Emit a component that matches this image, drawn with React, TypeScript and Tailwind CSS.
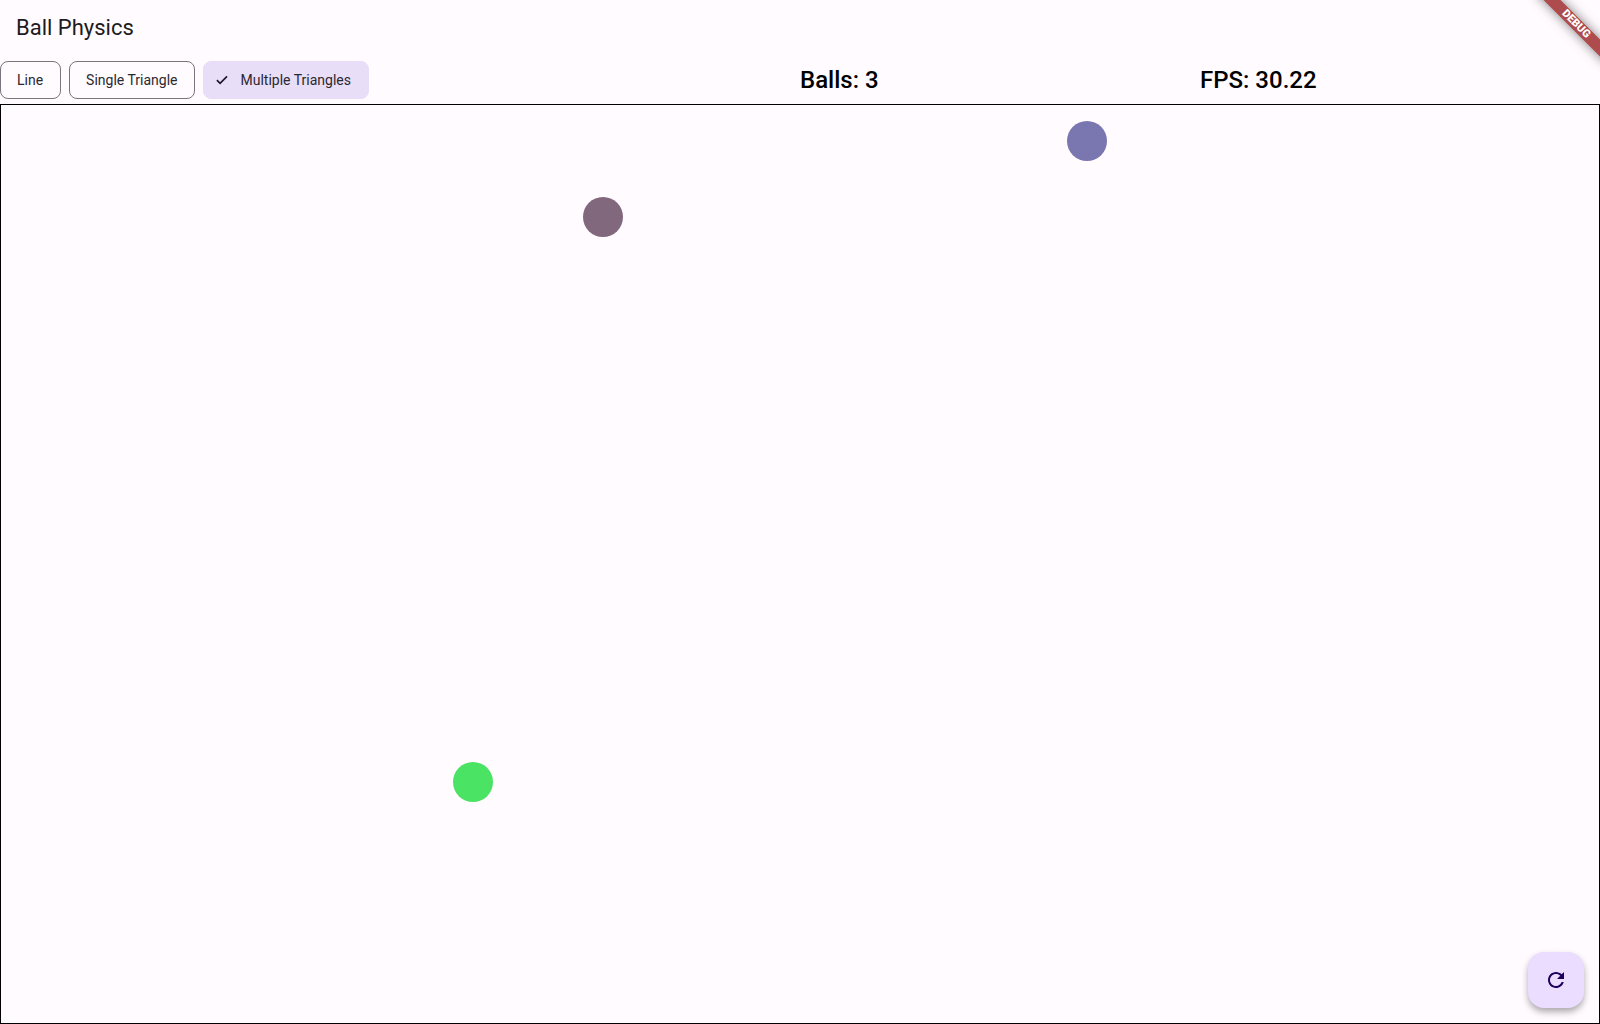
import { useState } from 'react';

const MODES = ['Line', 'Single Triangle', 'Multiple Triangles'];

const BALLS = [
  { id: 1, x: 1066, y: 16, color: '#7a77b0' },
  { id: 2, x: 582, y: 92, color: '#82687d' },
  { id: 3, x: 452, y: 657, color: '#4ae364' },
];

function CheckMark() {
  return (
    <svg viewBox="0 0 12 10" className="ml-3 mr-3 h-[10px] w-3 shrink-0" fill="none" aria-hidden="true">
      <path d="M0.9 5.2 L4.1 8.4 L11 1.4" stroke="#1d192b" strokeWidth="1.7" />
    </svg>
  );
}

function Chip({ label, selected, onSelect }: { label: string; selected: boolean; onSelect: () => void }) {
  return (
    <button
      type="button"
      aria-pressed={selected}
      onClick={onSelect}
      className={
        selected
          ? 'flex h-[38px] items-center rounded-lg border border-[#e8def8] bg-[#e8def8] pr-[17px] text-sm text-[#2b2830]'
          : 'flex h-[38px] items-center rounded-lg border border-[#79747e] pl-4 pr-[17px] text-sm text-[#2b2830]'
      }
    >
      {selected && <CheckMark />}
      {label}
    </button>
  );
}

function DebugBanner() {
  return (
    <div className="pointer-events-none absolute right-0 top-0 size-20 overflow-hidden">
      <div className="absolute -right-[26px] top-[18px] flex h-3 w-[100px] rotate-45 items-center justify-center bg-[#ae4b4d] text-[11px] font-black leading-3 text-white shadow-[0_0_12px_rgba(0,0,0,0.5)]">
        DEBUG
      </div>
    </div>
  );
}

export default function App() {
  const [mode, setMode] = useState('Multiple Triangles');

  return (
    <div className="relative flex min-h-screen flex-col overflow-hidden bg-[#fffbff] font-[Roboto,sans-serif] text-[#1d1b20]">
      <header className="flex h-14 items-center px-4">
        <h1 className="text-[22px] leading-7">Ball Physics</h1>
      </header>

      <div className="grid h-12 grid-cols-[2fr_1fr_1fr] items-center">
        <div className="flex gap-2">
          {MODES.map((name) => (
            <Chip key={name} label={name} selected={mode === name} onSelect={() => setMode(name)} />
          ))}
        </div>
        <p className="text-2xl font-medium text-black">Balls: 3</p>
        <p className="text-2xl font-medium text-black">FPS: 30.22</p>
      </div>

      <main className="relative grow border border-black">
        {BALLS.map((ball) => (
          <div
            key={ball.id}
            className="absolute size-10 rounded-full"
            style={{ left: ball.x, top: ball.y, backgroundColor: ball.color }}
          />
        ))}
      </main>

      <button
        type="button"
        aria-label="Restart"
        className="absolute bottom-4 right-4 flex size-14 items-center justify-center rounded-2xl bg-[#eaddff] shadow-[0_4px_6px_-1px_rgba(0,0,0,0.25),0_4px_10px_0_rgba(0,0,0,0.14)]"
      >
        <svg viewBox="0 0 24 24" className="size-6" fill="#21005d" aria-hidden="true">
          <path d="M17.65 6.35C16.2 4.9 14.21 4 12 4c-4.42 0-7.99 3.58-7.99 8s3.57 8 7.99 8c3.73 0 6.84-2.55 7.73-6h-2.08c-.82 2.33-3.04 4-5.65 4-3.31 0-6-2.69-6-6s2.69-6 6-6c1.66 0 3.14.69 4.22 1.78L13 11h7V4l-2.35 2.35z" />
        </svg>
      </button>

      <DebugBanner />
    </div>
  );
}
